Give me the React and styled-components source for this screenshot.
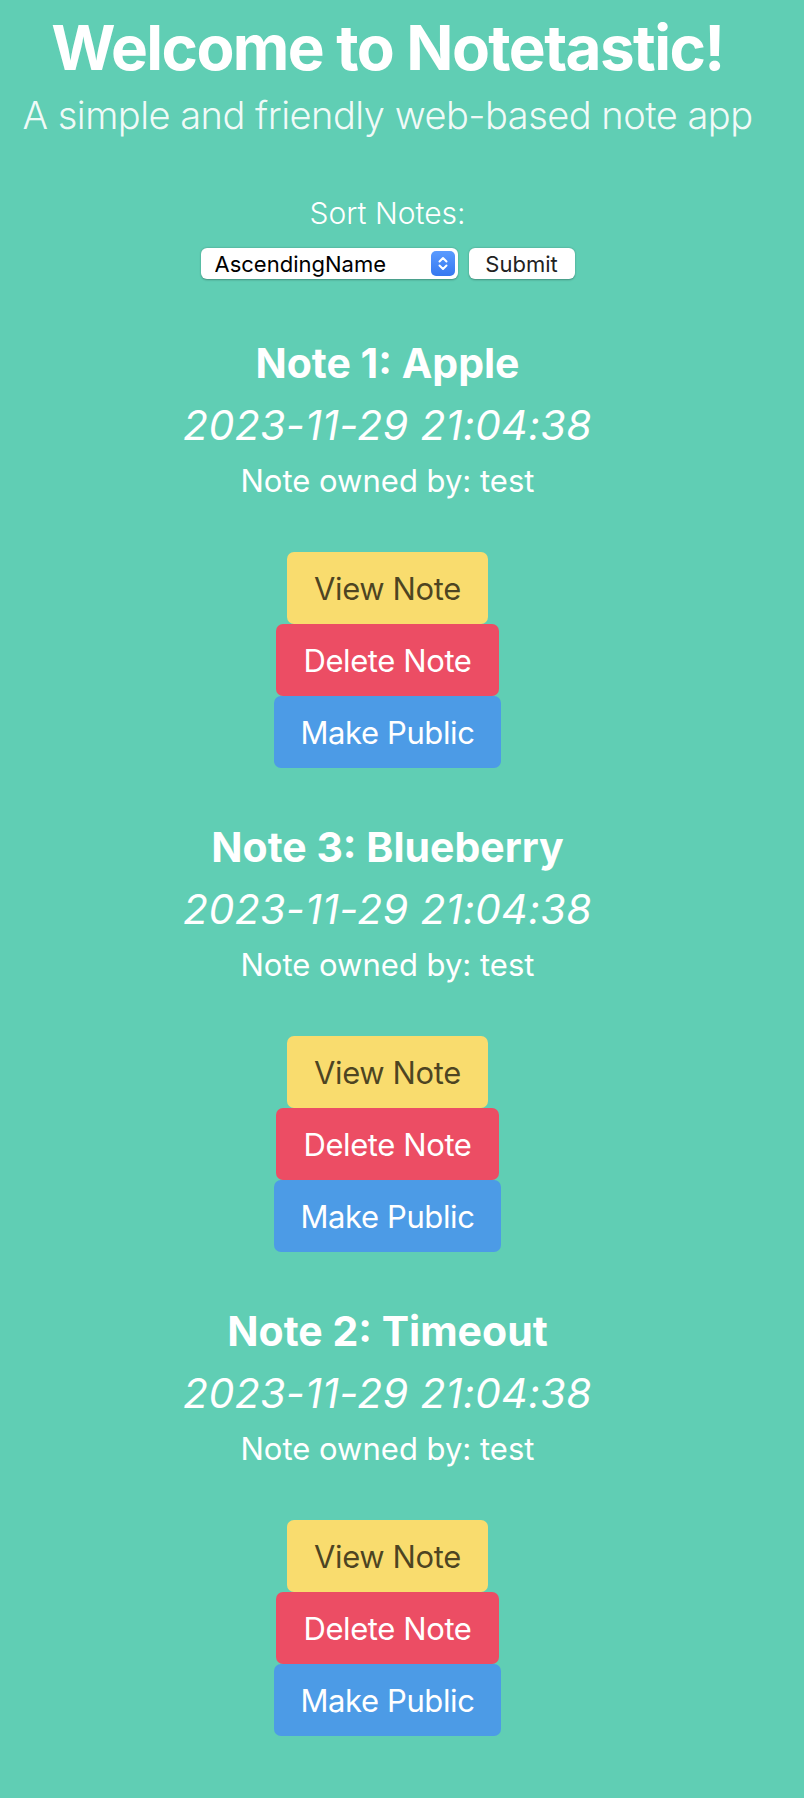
import React from "react";
import styled, { createGlobalStyle } from "styled-components";

const notes = [
  { id: 1, title: "Apple", date: "2023-11-29 21:04:38", owner: "test" },
  { id: 3, title: "Blueberry", date: "2023-11-29 21:04:38", owner: "test" },
  { id: 2, title: "Timeout", date: "2023-11-29 21:04:38", owner: "test" },
];

const GlobalStyle = createGlobalStyle`
  html, body {
    margin: 0;
    padding: 0;
    background: #60ceb4;
  }
  body {
    font-family: Inter, "Noto Sans", sans-serif;
    color: #fff;
  }
`;

export default function App() {
  return (
    <Page>
      <GlobalStyle />
      <Header>
        <Title>Welcome to Notetastic!</Title>
        <Subtitle>A simple and friendly web-based note app</Subtitle>
      </Header>
      <SortForm onSubmit={e => e.preventDefault()}>
        <SortLabel htmlFor="sort">Sort Notes:</SortLabel>
        <FormRow>
          <SelectWrap>
            <Select id="sort" defaultValue="AscendingName">
              <option>AscendingName</option>
              <option>DescendingName</option>
              <option>AscendingDate</option>
              <option>DescendingDate</option>
            </Select>
            <Stepper viewBox="0 0 24 25">
              <path
                d="M8.5 10.5 L12 7 L15.5 10.5 M8.5 14.5 L12 18 L15.5 14.5"
                fill="none"
                stroke="#fff"
                strokeWidth="2"
                strokeLinecap="round"
                strokeLinejoin="round"
              />
            </Stepper>
          </SelectWrap>
          <SubmitButton type="submit">Submit</SubmitButton>
        </FormRow>
      </SortForm>
      <NoteList>
        {notes.map(note => (
          <Note key={note.id}>
            <NoteTitle>
              Note {note.id}: {note.title}
            </NoteTitle>
            <NoteDate>{note.date}</NoteDate>
            <NoteOwner>Note owned by: {note.owner}</NoteOwner>
            <Actions>
              <ActionButton $variant="view">View Note</ActionButton>
              <ActionButton $variant="delete">Delete Note</ActionButton>
              <ActionButton $variant="public">Make Public</ActionButton>
            </Actions>
          </Note>
        ))}
      </NoteList>
    </Page>
  );
}

const VARIANTS = {
  view: { bg: "#f9dc6e", fg: "rgba(0, 0, 0, 0.7)" },
  delete: { bg: "#ec4d64", fg: "#fff" },
  public: { bg: "#4c9be6", fg: "#fff" },
};

const Page = styled.main`
  width: 775px;
  min-height: 1798px;
  padding-top: 10px;
  box-sizing: border-box;
  text-align: center;
`;

const Header = styled.header`
  display: flex;
  flex-direction: column;
  align-items: center;
`;

const Title = styled.h1`
  margin: 0;
  font-size: 62px;
  line-height: 76px;
  font-weight: 700;
  letter-spacing: -1.6px;
`;

const Subtitle = styled.p`
  margin: 6px 0 0;
  font-size: 38px;
  line-height: 46px;
  font-weight: 300;
  letter-spacing: -0.5px;
  color: rgba(255, 255, 255, 0.92);
`;

const SortForm = styled.form`
  display: flex;
  flex-direction: column;
  align-items: center;
  margin-top: 58px;
`;

const SortLabel = styled.label`
  font-size: 30px;
  line-height: 34px;
  font-weight: 300;
`;

const FormRow = styled.div`
  display: flex;
  gap: 11px;
  margin-top: 18px;
`;

const SelectWrap = styled.div`
  position: relative;
  width: 257px;
  height: 31px;
`;

const Select = styled.select`
  appearance: none;
  width: 100%;
  height: 100%;
  border: none;
  border-radius: 6px;
  background: #fff;
  box-shadow: 0 0.5px 2px rgba(0, 0, 0, 0.3);
  padding: 0 0 0 14px;
  font-family: Inter, sans-serif;
  font-size: 22px;
  color: #000;
  outline: none;
`;

const Stepper = styled.svg`
  position: absolute;
  top: 3px;
  right: 3px;
  width: 24px;
  height: 25px;
  border-radius: 5px;
  background: linear-gradient(#5a9bff, #3678f0);
  pointer-events: none;
`;

const SubmitButton = styled.button`
  width: 106px;
  height: 31px;
  border: none;
  border-radius: 6px;
  background: #fff;
  box-shadow: 0 0.5px 2px rgba(0, 0, 0, 0.3);
  font-family: Inter, sans-serif;
  font-size: 22px;
  color: #222;
  padding: 0;
`;

const NoteList = styled.section`
  display: flex;
  flex-direction: column;
  align-items: center;
  margin-top: 59px;
  gap: 54px;
`;

const Note = styled.article`
  display: flex;
  flex-direction: column;
  align-items: center;
`;

const NoteTitle = styled.h2`
  margin: 0;
  font-size: 41px;
  line-height: 50px;
  font-weight: 700;
`;

const NoteDate = styled.p`
  margin: 12px 0 0;
  font-size: 41px;
  line-height: 50px;
  font-style: italic;
  letter-spacing: 0.4px;
`;

const NoteOwner = styled.p`
  margin: 12px 0 0;
  font-size: 31px;
  line-height: 38px;
`;

const Actions = styled.div`
  display: flex;
  flex-direction: column;
  align-items: center;
  margin-top: 52px;
`;

const ActionButton = styled.button`
  height: 72px;
  padding: 0 27px;
  border: none;
  border-radius: 7px;
  font-family: Inter, sans-serif;
  font-size: 31px;
  letter-spacing: -0.4px;
  background: ${({ $variant }) => VARIANTS[$variant].bg};
  color: ${({ $variant }) => VARIANTS[$variant].fg};
  cursor: pointer;
`;
